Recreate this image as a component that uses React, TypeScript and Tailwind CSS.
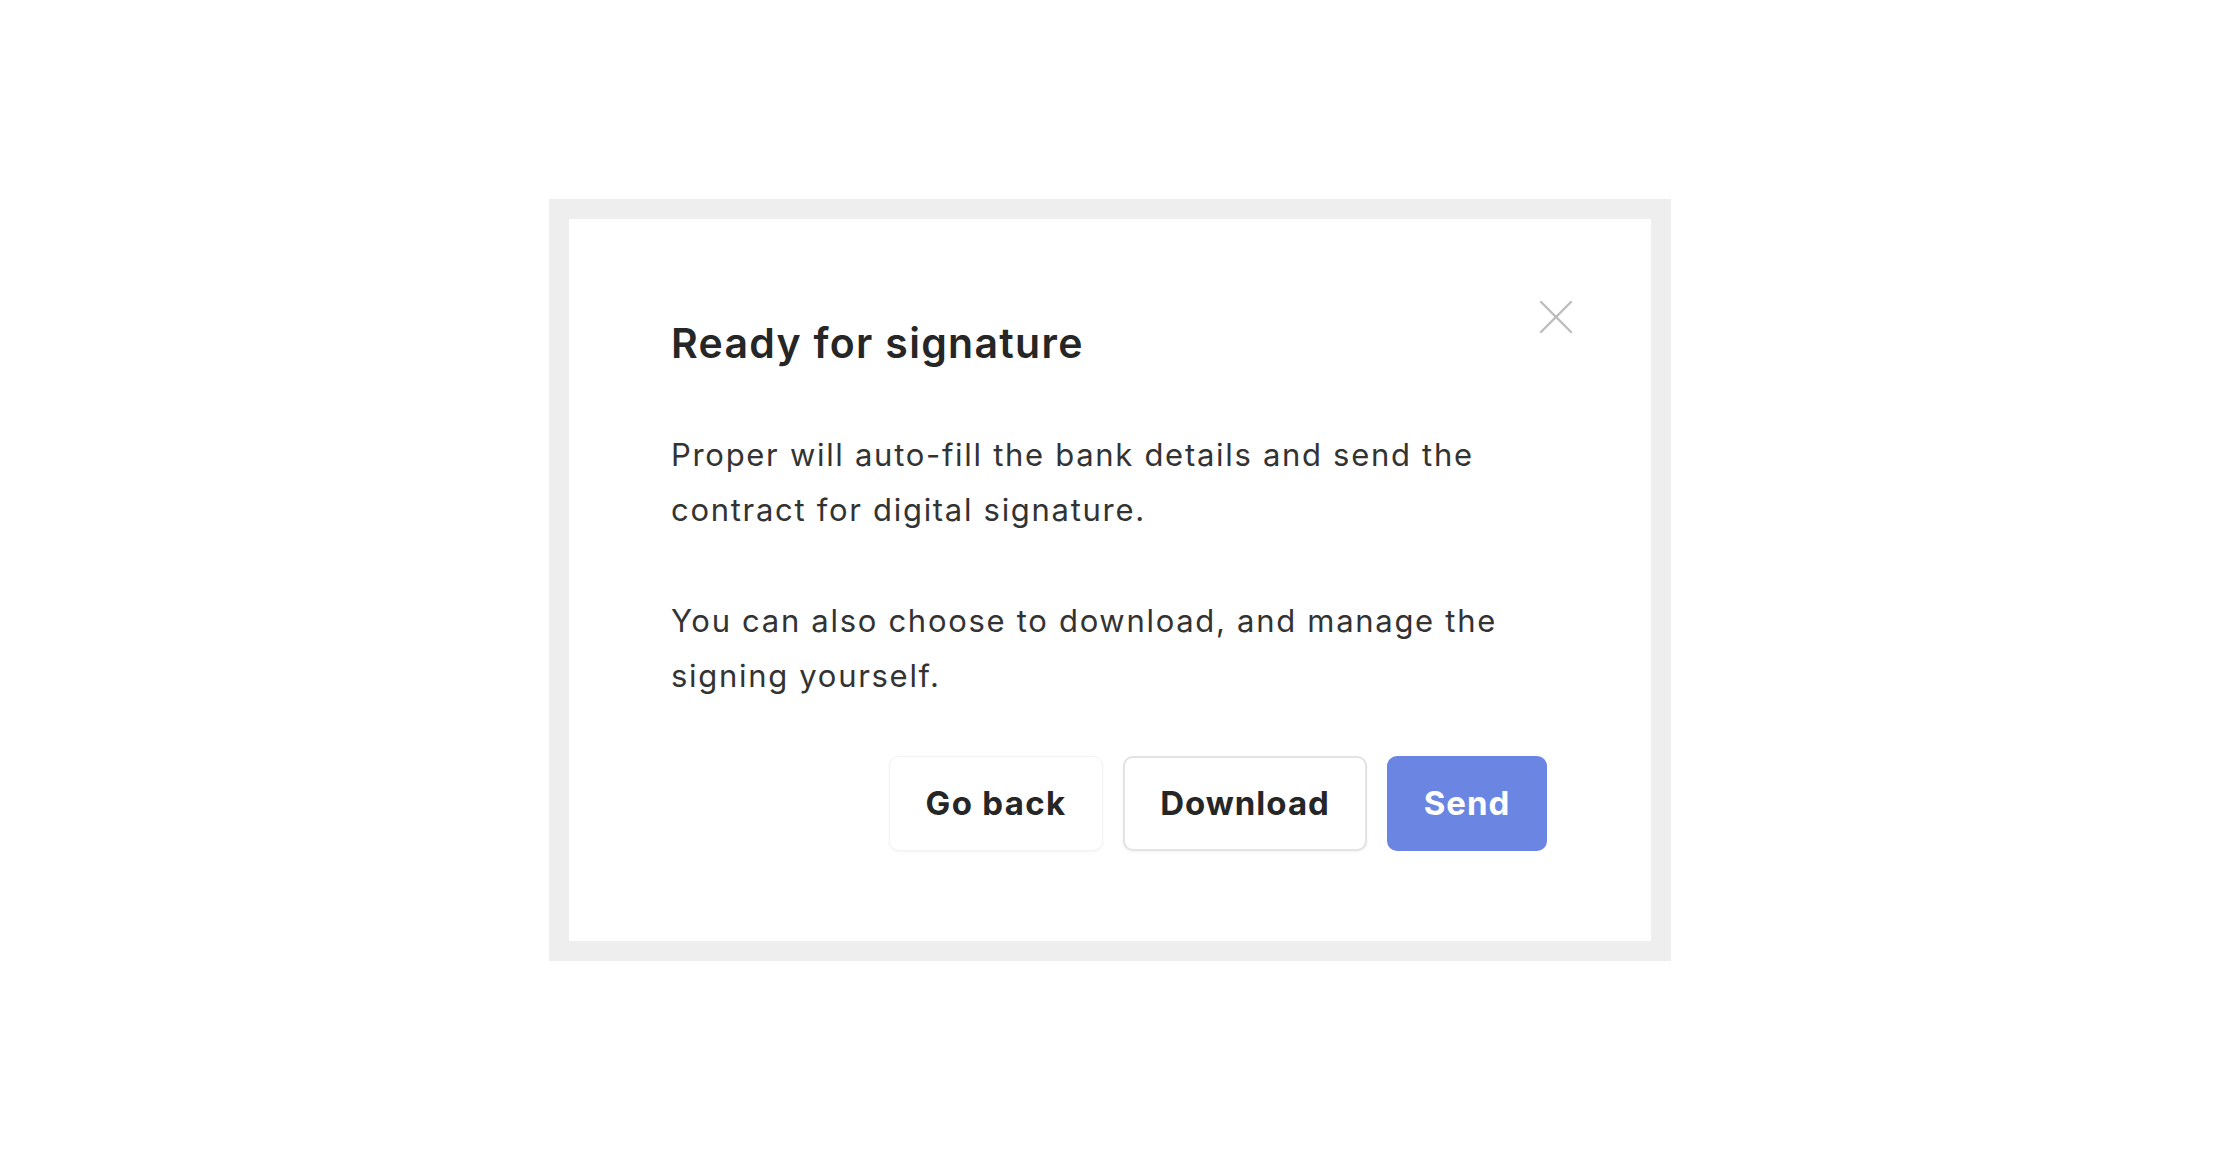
import React from "react";

function CloseIcon() {
  return (
    <svg width="34" height="34" viewBox="0 0 34 34" fill="none" stroke="#bdbdbd" strokeWidth="2.4" strokeLinecap="round">
      <path d="M2 2 L32 32" />
      <path d="M32 2 L2 32" />
    </svg>
  );
}

export default function App() {
  return (
    <div className="flex h-[1160px] w-full items-center justify-center bg-white" style={{ fontFamily: "Inter, 'Noto Sans', sans-serif" }}>
      <div className="border-[20px] border-[#eeeeee]">
        <div className="relative flex h-[722px] w-[1082px] flex-col bg-white pl-[102px] pr-[104px] pt-[100px]">
          <button className="absolute right-[78px] top-[81px]" aria-label="Close">
            <CloseIcon />
          </button>
          <h2 className="text-[41px] font-semibold leading-[48px] tracking-[1.3px] text-[#262626]">Ready for signature</h2>
          <p className="mt-[60px] text-[31px] leading-[55px] tracking-[1.7px] text-[#333333]">
            Proper will auto-fill the bank details and send the contract for digital signature.
          </p>
          <p className="mt-[56px] text-[31px] leading-[55px] tracking-[1.7px] text-[#333333]">
            You can also choose to download, and manage the signing yourself.
          </p>
          <div className="mt-[53px] flex justify-end gap-[20px]">
            <button className="flex h-[95px] w-[214px] items-center justify-center rounded-[10px] border border-[#f3f3f3] bg-white text-[33px] font-bold tracking-[1.3px] text-[#262626] shadow-[0_1px_3px_rgba(0,0,0,0.05)]">
              Go back
            </button>
            <button className="flex h-[95px] w-[244px] items-center justify-center rounded-[10px] border-2 border-[#e3e3e3] bg-white text-[33px] font-bold tracking-[1px] text-[#262626] shadow-[0_1px_3px_rgba(0,0,0,0.06)]">
              Download
            </button>
            <button className="flex h-[95px] w-[160px] items-center justify-center rounded-[10px] bg-[#6a86e2] text-[33px] font-bold tracking-[1px] text-white">
              Send
            </button>
          </div>
        </div>
      </div>
    </div>
  );
}
